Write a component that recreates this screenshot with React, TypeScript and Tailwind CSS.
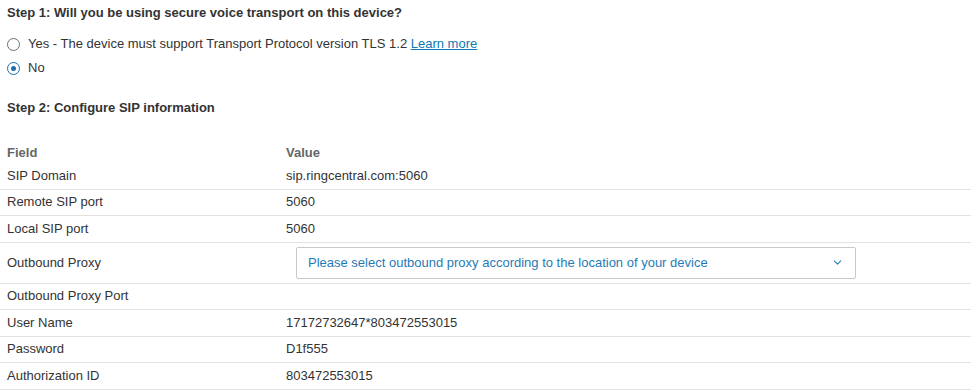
import { ChevronDown } from "lucide-react";

type Row = { field: string; value?: string; select?: boolean };

const rows: Row[] = [
  { field: "SIP Domain", value: "sip.ringcentral.com:5060" },
  { field: "Remote SIP port", value: "5060" },
  { field: "Local SIP port", value: "5060" },
  { field: "Outbound Proxy", select: true },
  { field: "Outbound Proxy Port", value: "" },
  { field: "User Name", value: "17172732647*803472553015" },
  { field: "Password", value: "D1f555" },
  { field: "Authorization ID", value: "803472553015" },
];

function Radio({ checked, children }: { checked?: boolean; children: React.ReactNode }) {
  return (
    <label className="flex items-center h-[18px] pl-[7px]">
      {/* radio circle */}
      <span
        className={`flex items-center justify-center w-[13px] h-[13px] rounded-full border ${
          checked ? "border-[#1f6fae]" : "border-[#6f6f6f]"
        }`}
      >
        {checked && <span className="w-[5px] h-[5px] rounded-full bg-[#1f6fae]" />}
      </span>
      <span className="ml-[8px]">{children}</span>
    </label>
  );
}

export default function App() {
  return (
    <div className="w-[971px] h-[391px] bg-white text-[13px] leading-[18px] text-[#333] font-['Liberation_Sans',Arial,sans-serif] overflow-hidden">
      {/* Step 1 */}
      <h3 className="pt-[4px] pl-[7px] font-bold text-[#333]">
        Step 1: Will you be using secure voice transport on this device?
      </h3>
      <div className="mt-[13px] flex flex-col gap-[6px]">
        <Radio>
          Yes - The device must support Transport Protocol version TLS 1.2{" "}
          <a className="text-[#0d79b6] underline">Learn more</a>
        </Radio>
        <Radio checked>No</Radio>
      </div>

      {/* Step 2 */}
      <h3 className="mt-[22px] pl-[7px] font-bold text-[#333]">Step 2: Configure SIP information</h3>

      <div className="mt-[26px] w-[971px]">
        <div className="grid grid-cols-[279px_1fr] h-[20px] items-center font-bold text-[#666]">
          <div className="pl-[7px]">Field</div>
          <div className="pl-[7px]">Value</div>
        </div>
        {rows.map((row) => (
          <div
            key={row.field}
            className={`grid grid-cols-[279px_1fr] items-center border-b border-[#e2e2e2] ${
              row.select ? "h-[41px]" : "h-[26.5px]"
            }`}
          >
            <div className="pl-[7px]">{row.field}</div>
            {row.select ? (
              <div className="pl-[17px]">
                <div className="flex items-center justify-between w-[560px] h-[32px] border border-[#c9c9c9] rounded-[2px] pl-[11px] pr-[11px] text-[#1f7bb6]">
                  <span>Please select outbound proxy according to the location of your device</span>
                  <ChevronDown size={13} strokeWidth={2} className="text-[#2b7fb8]" />
                </div>
              </div>
            ) : (
              <div className="pl-[7px]">{row.value}</div>
            )}
          </div>
        ))}
      </div>
    </div>
  );
}
